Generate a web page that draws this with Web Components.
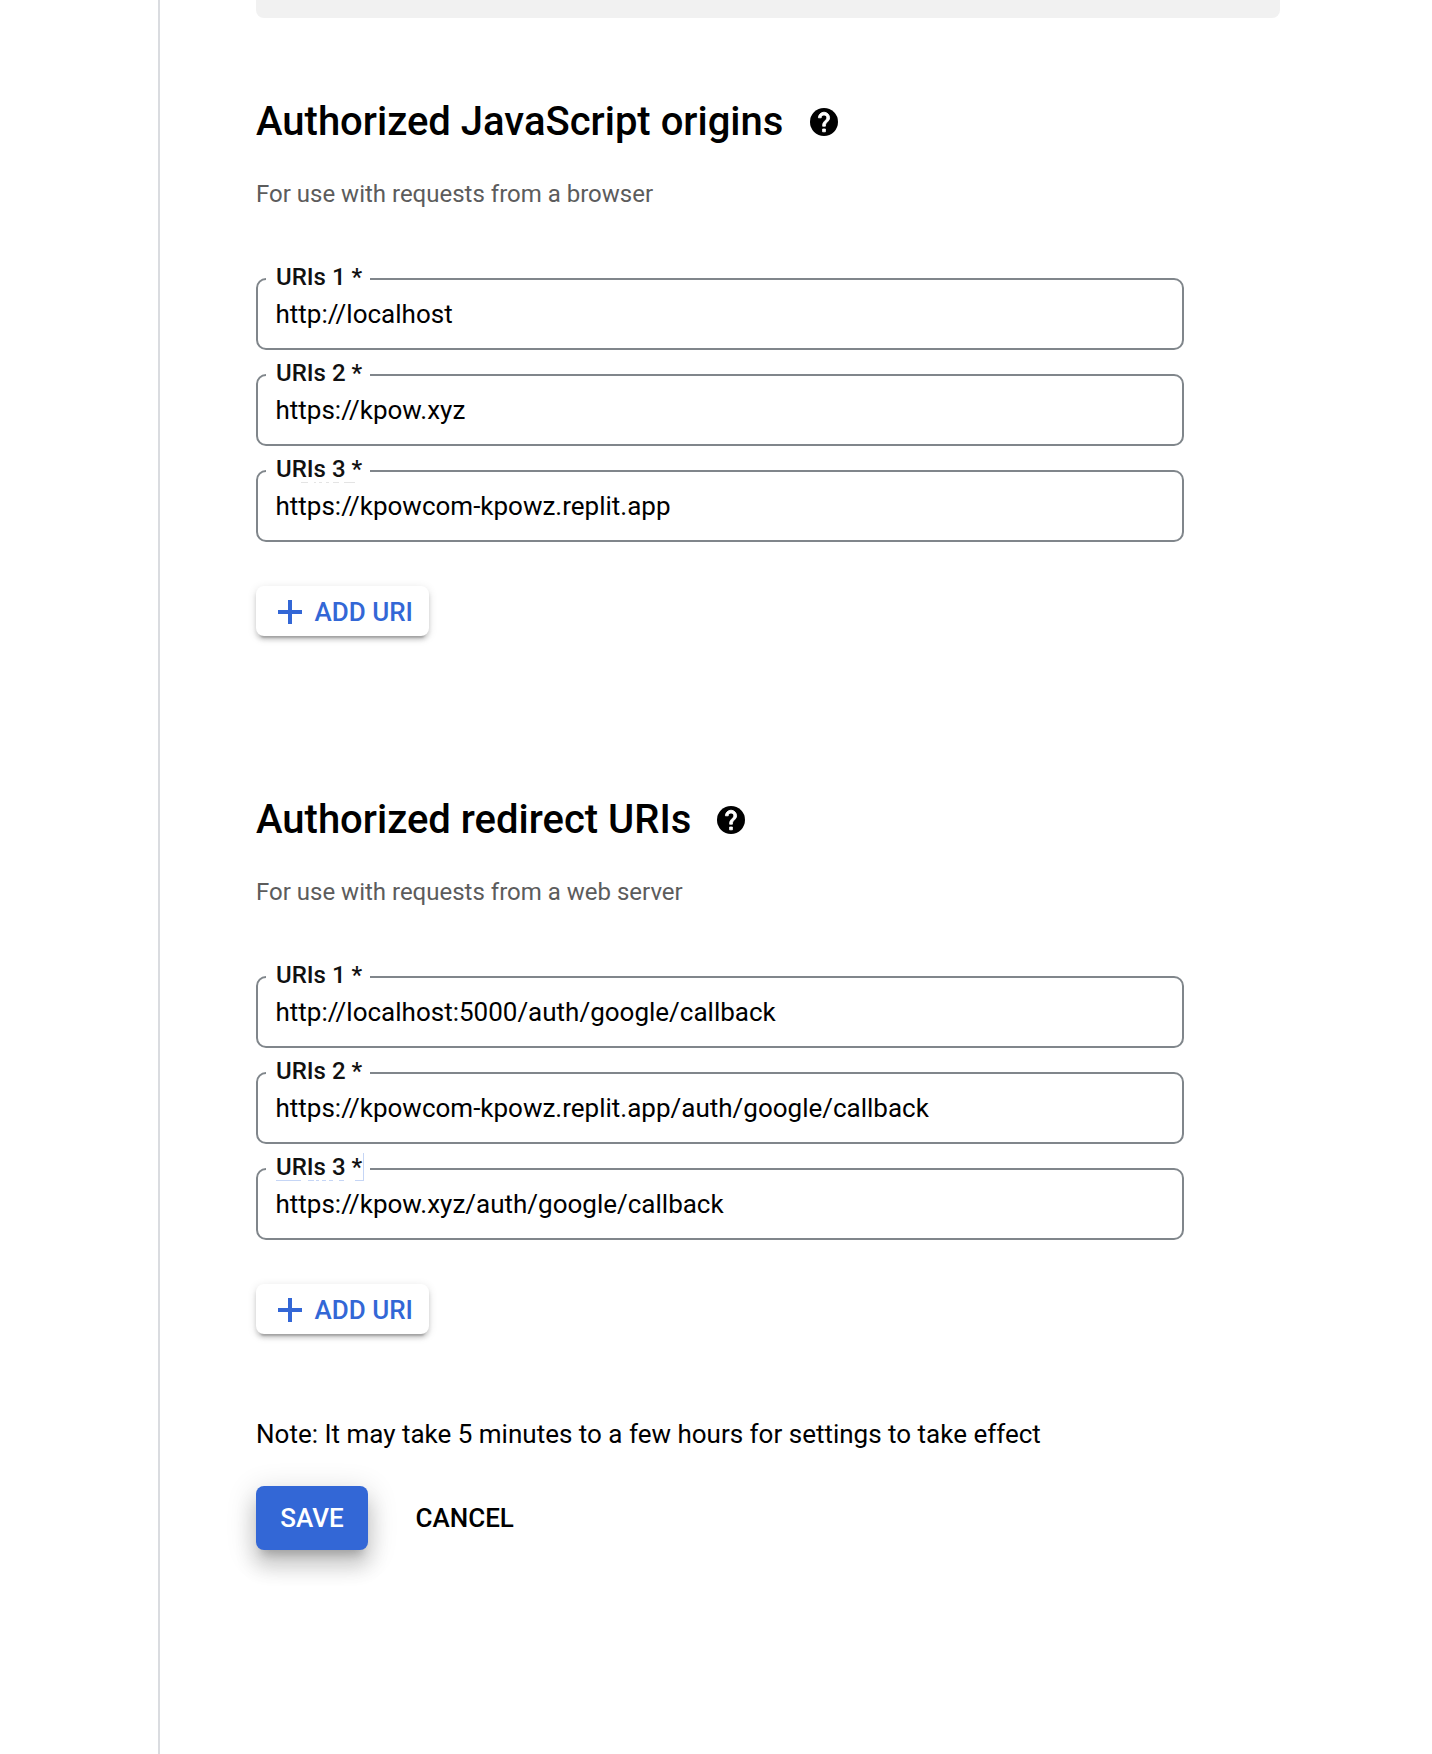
<!DOCTYPE html>
<html lang="en">
<head>
<meta charset="utf-8">
<title>OAuth client settings</title>
<style>
html,body{margin:0;height:100%;background:#fff;overflow:hidden}
body{font-family:Roboto,sans-serif;color:#000}
</style>
</head>
<body>
<client-page>
  <uri-section style="--icon-gap:27px" heading="Authorized JavaScript origins" hint="For use with requests from a browser">
    <uri-field label="URIs 1 *">http://localhost</uri-field>
    <uri-field label="URIs 2 *">https://kpow.xyz</uri-field>
    <uri-field label="URIs 3 *" mark="faint">https://kpowcom-kpowz.replit.app</uri-field>
  </uri-section>
  <uri-section heading="Authorized redirect URIs" hint="For use with requests from a web server">
    <uri-field label="URIs 1 *">http://localhost:5000/auth/google/callback</uri-field>
    <uri-field label="URIs 2 *">https://kpowcom-kpowz.replit.app/auth/google/callback</uri-field>
    <uri-field label="URIs 3 *" mark="edge">https://kpow.xyz/auth/google/callback</uri-field>
  </uri-section>
  <form-footer slot="footer"></form-footer>
</client-page>
<script>
const attach = (el, html) => { el.attachShadow({mode:'open'}).innerHTML = html; };

customElements.define('help-icon', class extends HTMLElement {
  constructor(){ super(); attach(this, `
<style>:host{display:block;width:28px;height:28px}svg{display:block}</style>
<svg width="28" height="28" viewBox="2 2 20 20"><circle cx="12" cy="12" r="10" fill="#000"/>
<path fill="#fff" stroke="#fff" stroke-width=".6" d="M13 19h-2v-2h2v2zM15.07 11.25l-.9.92C13.45 12.9 13 13.5 13 15h-2v-.5c0-1.1.45-2.1 1.17-2.83l1.24-1.26c.37-.36.59-.86.59-1.41 0-1.1-.9-2-2-2s-2 .9-2 2H8c0-2.21 1.79-4 4-4s4 1.79 4 4c0 .88-.36 1.68-.93 2.25z"/></svg>`); }
});

customElements.define('uri-field', class extends HTMLElement {
  connectedCallback(){ if (this.shadowRoot) return; attach(this, `
<style>
:host{display:block}
fieldset{box-sizing:border-box;margin:0;min-width:0;height:87px;border:2px solid #80868b;border-radius:10px;padding:4px 17.5px 0 8px}
legend{box-sizing:border-box;display:block;width:104px;height:32px;padding:0 0 0 10px}
.t{display:block;box-sizing:border-box;width:88px;height:28px;font-weight:500;font-size:24px;line-height:28px;white-space:nowrap;color:#111}
.v{padding-left:9.5px;font-size:26px;line-height:30px;white-space:nowrap}
:host([mark=faint]) .t{background:linear-gradient(90deg,transparent 25px,#e4e4e4 25px 32px,transparent 32px 38px,#e4e4e4 38px 40px,transparent 40px 43px,#e4e4e4 43px 46px,transparent 46px 50px,#e4e4e4 50px 53px,transparent 53px 57px,#e4e4e4 57px 63px,transparent 63px 68px,#e4e4e4 68px 79px,transparent 79px) 0 100%/100% 1px no-repeat}
:host([mark=edge]) .t{background:linear-gradient(90deg,#c5d5f5 25px,transparent 25px 32px,#c5d5f5 32px 38px,transparent 38px 40px,#c5d5f5 40px 43px,transparent 43px 46px,#c5d5f5 46px 50px,transparent 50px 53px,#c5d5f5 53px 57px,transparent 57px 63px,#c5d5f5 63px 68px,transparent 68px 79px,#c5d5f5 79px) 0 100%/100% 1px no-repeat,linear-gradient(#c5d5f5,#c5d5f5) 100% 0/1px 100% no-repeat}
</style>
<fieldset><legend><span class="t">${this.getAttribute('label')}</span></legend><div class="v"><slot></slot></div></fieldset>`); }
});

customElements.define('add-button', class extends HTMLElement {
  constructor(){ super(); attach(this, `
<style>
:host{display:flex;box-sizing:border-box;width:173px;height:50px;padding:2px 0 0 22px;align-items:center;gap:12.5px;border-radius:8px;background:#fff;color:#3367d6;font-weight:500;font-size:26px;line-height:30px;white-space:nowrap;
box-shadow:0 6px 2px -4px rgba(0,0,0,.2),0 4px 4px 0 rgba(0,0,0,.14),0 2px 10px 0 rgba(0,0,0,.12)}
svg{display:block;flex:none}
</style>
<svg width="24" height="24" viewBox="0 0 24 24" fill="currentColor"><path d="M10 0h4v10h10v4H14v10h-4V14H0v-4h10z"/></svg><span><slot></slot></span>`); }
});

customElements.define('uri-section', class extends HTMLElement {
  connectedCallback(){ if (this.shadowRoot) return; attach(this, `
<style>
:host{display:flex;flex-direction:column;height:698px}
header{display:flex;align-items:center;gap:var(--icon-gap,26px);height:48px}
h2{margin:0;font-weight:500;font-size:40px;line-height:48px;white-space:nowrap}
p{margin:34px 0 0;font-size:24px;line-height:28px;color:#5c5c5c}
.list{display:flex;flex-direction:column;gap:9px;width:928px;margin:55px 0 44px}
</style>
<header><h2>${this.getAttribute('heading')}</h2><help-icon></help-icon></header>
<p>${this.getAttribute('hint')}</p>
<div class="list"><slot></slot></div>
<add-button>ADD URI</add-button>`); }
});

customElements.define('form-footer', class extends HTMLElement {
  constructor(){ super(); attach(this, `
<style>
:host{display:block;font-size:26px;line-height:30px;white-space:nowrap}
p{margin:0 0 37px}
.row{display:flex;align-items:center;gap:47.5px;font-weight:500}
.save{display:flex;align-items:center;justify-content:center;width:112px;height:64px;border-radius:8px;background:#3367d6;color:#fff;
box-shadow:0 10px 10px -6px rgba(0,0,0,.2),0 16px 20px 2px rgba(0,0,0,.14),0 6px 28px 4px rgba(0,0,0,.12)}
</style>
<p>Note: It may take 5 minutes to a few hours for settings to take effect</p>
<div class="row"><span class="save">SAVE</span><span>CANCEL</span></div>`); }
});

customElements.define('client-page', class extends HTMLElement {
  constructor(){ super(); attach(this, `
<style>
:host{display:flex;box-sizing:border-box;height:1754px;padding-left:158px}
main{display:flex;flex-direction:column;flex:1;border-left:2px solid #dadce0;padding-left:96px}
.panel{width:1024px;height:18px;margin-bottom:80px;border-radius:0 0 8px 8px;background:#f1f1f1}
.foot{margin-top:-75px}
</style>
<main><div class="panel"></div><slot></slot><div class="foot"><slot name="footer"></slot></div></main>`); }
});
</script>
</body>
</html>
